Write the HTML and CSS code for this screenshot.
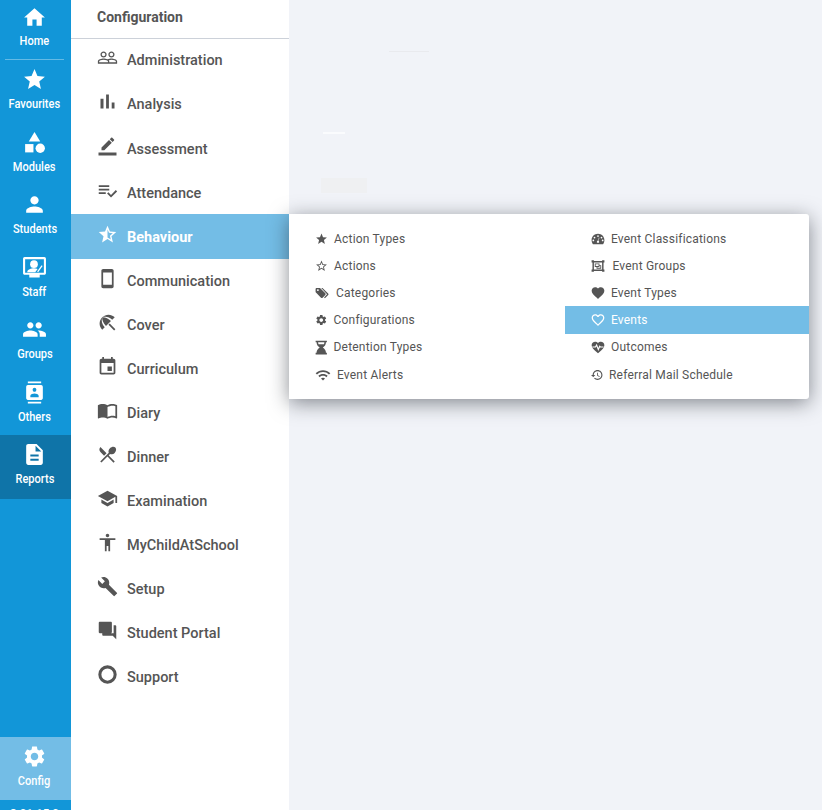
FILE: index.html
```html
<!DOCTYPE html>
<html lang="en">
<head>
<meta charset="utf-8">
<title>Configuration</title>
<link rel="stylesheet" href="styles.css">
</head>
<body>
<div class="app">
  <nav class="rail">
    <a class="rail-item rail-home"><svg class="rail-icon" viewBox="0 0 24 24"><path d="M10 20v-6h4v6h5v-8h3L12 3 2 12h3v8z"/></svg><span class="rail-label">Home</span></a>
    <div class="rail-divider"></div>
    <a class="rail-item"><svg class="rail-icon" viewBox="0 0 24 24"><path d="M12 17.27L18.18 21l-1.64-7.03L22 9.24l-7.19-.61L12 2 9.19 8.63 2 9.24l5.46 4.73L5.82 21z"/></svg><span class="rail-label">Favourites</span></a>
    <a class="rail-item"><svg class="rail-icon" viewBox="0 0 24 24"><path d="M12 2l-5.5 9h11z"/><circle cx="17.5" cy="17.5" r="4.5"/><path d="M3 13.5h8v8H3z"/></svg><span class="rail-label">Modules</span></a>
    <a class="rail-item"><svg class="rail-icon" viewBox="0 0 24 24"><path d="M12 12c2.21 0 4-1.79 4-4s-1.79-4-4-4-4 1.79-4 4 1.79 4 4 4zm0 2c-2.67 0-8 1.34-8 4v2h16v-2c0-2.66-5.33-4-8-4z"/></svg><span class="rail-label">Students</span></a>
    <a class="rail-item"><svg class="rail-icon" viewBox="0 0 24 24"><path fill-rule="evenodd" d="M2.500 2h19c.8 0 1.500.7 1.500 1.500v14c0 .8-.7 1.500-1.500 1.500H17v2.500H7V19H2.500c-.8 0-1.500-.7-1.500-1.500v-14C1 2.700 1.700 2 2.500 2zm.5 2v13h18V4H3z"/><circle cx="11.500" cy="8.800" r="3.700"/><path d="M5 16.500c0-2.800 3.900-3.800 6.500-3.800 1.200 0 2.500.2 3.500.7l-2.300 3.100z"/><path d="M14.500 15.800l4.300-6 1 .8-4.300 6z"/></svg><span class="rail-label">Staff</span></a>
    <a class="rail-item"><svg class="rail-icon" viewBox="0 0 24 24"><path d="M16 11c1.66 0 2.99-1.34 2.99-3S17.66 5 16 5c-1.66 0-3 1.34-3 3s1.34 3 3 3zm-8 0c1.66 0 2.99-1.34 2.99-3S9.66 5 8 5C6.34 5 5 6.34 5 8s1.34 3 3 3zm0 2c-2.33 0-7 1.17-7 3.5V19h14v-2.5c0-2.33-4.67-3.5-7-3.5zm8 0c-.29 0-.62.02-.97.05 1.16.84 1.97 1.97 1.97 3.45V19h6v-2.500c0-2.330-4.670-3.500-7-3.500z"/></svg><span class="rail-label">Groups</span></a>
    <a class="rail-item"><svg class="rail-icon" viewBox="-3 -1.500 30 27" preserveAspectRatio="none"><path d="M20 0H4v2h16V0zM4 24h16v-2H4v2zM20 4H4c-1.100 0-2 .9-2 2v12c0 1.100.9 2 2 2h16c1.100 0 2-.9 2-2V6c0-1.100-.9-2-2-2zm-8 2.750c1.240 0 2.250 1.010 2.250 2.250s-1.010 2.250-2.250 2.250S9.750 10.240 9.750 9 10.760 6.750 12 6.750zM17 17H7v-1.500c0-1.670 3.330-2.500 5-2.500s5 .83 5 2.500V17z"/></svg><span class="rail-label">Others</span></a>
    <a class="rail-item rail-current"><svg class="rail-icon" viewBox="0 0 24 24"><path d="M14 2H6c-1.100 0-1.990.9-1.990 2L4 20c0 1.100.89 2 1.990 2H18c1.100 0 2-.9 2-2V8l-6-6zm2 16H8v-2h8v2zm0-4H8v-2h8v2zm-3-5V3.500L18.500 9H13z"/></svg><span class="rail-label">Reports</span></a>
    <div class="rail-spacer"></div>
    <a class="rail-item rail-config"><svg class="rail-icon" viewBox="0 0 24 24"><path d="M19.140 12.940c.04-.3.06-.61.06-.94 0-.32-.02-.64-.07-.94l2.030-1.580c.18-.14.23-.41.12-.61l-1.920-3.320c-.12-.22-.37-.29-.59-.22l-2.390.96c-.5-.38-1.030-.7-1.620-.94l-.36-2.540c-.04-.24-.24-.41-.48-.41h-3.840c-.24 0-.43.17-.47.41l-.36 2.540c-.59.24-1.130.57-1.620.94l-2.390-.96c-.22-.08-.47 0-.59.22L2.740 8.870c-.12.21-.08.47.12.61l2.030 1.580c-.05.3-.09.63-.09.94s.02.64.07.94l-2.030 1.580c-.18.14-.23.41-.12.61l1.920 3.320c.12.22.37.29.59.22l2.390-.96c.5.38 1.030.7 1.620.94l.36 2.540c.05.24.24.41.48.41h3.840c.24 0 .44-.17.47-.41l.36-2.540c.59-.24 1.130-.56 1.620-.94l2.390.96c.22.08.47 0 .59-.22l1.920-3.320c.12-.22.07-.47-.12-.61l-2.010-1.580zM12 15.600c-1.980 0-3.600-1.620-3.600-3.600s1.620-3.600 3.600-3.600 3.600 1.620 3.600 3.600-1.620 3.600-3.600 3.600z"/></svg><span class="rail-label">Config</span></a>
    <div class="rail-version">2.01.15.0</div>
  </nav>

  <aside class="menu">
    <header class="menu-title">Configuration</header>
    <a class="menu-row"><svg class="menu-icon" viewBox="0 0 24 24"><path d="M16.500 13c-1.200 0-3.070.34-4.500 1-1.430-.67-3.300-1-4.500-1C5.330 13 1 14.080 1 16.250V19h22v-2.750c0-2.170-4.330-3.250-6.500-3.250zm-4 4.500h-10v-1.250c0-.54 2.560-1.750 5-1.750s5 1.210 5 1.750v1.250zm9 0H14v-1.250c0-.46-.2-.86-.52-1.220.88-.3 1.960-.53 3.020-.53 2.440 0 5 1.210 5 1.750v1.250zM7.500 12c1.930 0 3.500-1.570 3.500-3.500S9.430 5 7.500 5 4 6.570 4 8.500 5.570 12 7.500 12zm0-5.500c1.100 0 2 .9 2 2s-.9 2-2 2-2-.9-2-2 .9-2 2-2zm9 5.500c1.930 0 3.500-1.570 3.500-3.500S18.430 5 16.500 5 13 6.570 13 8.500s1.570 3.500 3.500 3.500zm0-5.500c1.100 0 2 .9 2 2s-.9 2-2 2-2-.9-2-2 .9-2 2-2z"/></svg><span>Administration</span></a>
    <a class="menu-row"><svg class="menu-icon" viewBox="1.500 1.500 21 21"><path d="M5 9.200h3V19H5zM10.600 5h2.800v14h-2.800zm5.600 8H19v6h-2.800z"/></svg><span>Analysis</span></a>
    <a class="menu-row"><svg class="menu-icon" viewBox="-2 -2 28 28"><path d="M17.750 7L14 3.250l-10 10V17h3.750l10-10zm2.960-2.960c.39-.39.39-1.020 0-1.410L18.370.29c-.39-.39-1.020-.39-1.410 0L15 2.250 18.750 6l1.960-1.960z"/><path d="M0 20h24v4H0z"/></svg><span>Assessment</span></a>
    <a class="menu-row"><svg class="menu-icon" viewBox="0 0 24 24"><path d="M14 10H2v2h12v-2zm0-4H2v2h12V6zM2 16h8v-2H2v2zm19.500-4.500L23 13l-6.990 7-4.510-4.500L13 14l3.010 3 5.490-5.500z"/></svg><span>Attendance</span></a>
    <a class="menu-row menu-active"><svg class="menu-icon" viewBox="0 0 24 24"><path d="M22 9.240l-7.190-.62L12 2 9.190 8.630 2 9.240l5.460 4.730L5.820 21 12 17.270 18.180 21l-1.630-7.030L22 9.240zM12 15.400V6.100l1.710 4.040 4.380.38-3.320 2.880 1 4.280L12 15.400z" fill-rule="evenodd"/></svg><span>Behaviour</span></a>
    <a class="menu-row"><svg class="menu-icon" viewBox="0 0 24 24"><path d="M17 1.010L7 1c-1.100 0-2 .9-2 2v18c0 1.100.9 2 2 2h10c1.100 0 2-.9 2-2V3c0-1.100-.9-1.990-2-1.990zM17 19H7V5h10v14z"/></svg><span>Communication</span></a>
    <a class="menu-row"><svg class="menu-icon" viewBox="0 0 24 24"><path d="M13.127 14.560l1.430-1.430 6.440 6.443L19.570 21zm4.293-5.730l2.860-2.860c-3.950-3.950-10.350-3.960-14.300-.02 3.930-1.300 8.310-.25 11.440 2.880zM5.950 5.980c-3.940 3.950-3.930 10.350.02 14.300l2.860-2.860C5.700 14.290 4.650 9.910 5.950 5.980zm.02-.02l-.01.01c-.38 3.010 1.170 6.880 4.300 10.020l5.730-5.730c-3.130-3.130-7.010-4.680-10.020-4.300z"/></svg><span>Cover</span></a>
    <a class="menu-row"><svg class="menu-icon" viewBox="0 0 24 24"><path d="M17 12h-5v5h5v-5zM16 1v2H8V1H6v2H5c-1.110 0-1.990.9-1.990 2L3 19c0 1.100.89 2 2 2h14c1.100 0 2-.9 2-2V5c0-1.100-.9-2-2-2h-1V1h-2zm3 18H5V8h14v11z"/></svg><span>Curriculum</span></a>
    <a class="menu-row"><svg class="menu-icon" viewBox="0 0 24 24"><path d="M21 5c-1.110-.35-2.330-.5-3.500-.5-1.950 0-4.050.4-5.500 1.500-1.450-1.100-3.550-1.500-5.500-1.500S2.450 4.900 1 6v14.650c0 .25.25.5.5.5.1 0 .15-.05.25-.05C3.100 20.450 5.050 20 6.500 20c1.950 0 4.050.4 5.500 1.500 1.350-.85 3.800-1.500 5.500-1.500 1.650 0 3.350.3 4.750 1.050.1.05.15.05.25.05.25 0 .5-.25.5-.5V6c-.6-.45-1.250-.75-2-1zm0 13.500c-1.100-.35-2.300-.5-3.500-.5-1.700 0-4.150.65-5.500 1.500V8c1.350-.85 3.800-1.500 5.500-1.500 1.200 0 2.400.15 3.500.5v11.500z"/></svg><span>Diary</span></a>
    <a class="menu-row"><svg class="menu-icon" viewBox="0 0 24 24"><path d="M8.100 13.340l2.830-2.830L3.910 3.500c-1.560 1.560-1.560 4.090 0 5.660l4.190 4.180zm6.780-1.810c1.530.71 3.680.21 5.270-1.380 1.910-1.910 2.280-4.650.81-6.120-1.460-1.460-4.200-1.100-6.120.81-1.590 1.590-2.090 3.740-1.380 5.270L3.700 19.870l1.410 1.410L12 14.410l6.880 6.880 1.410-1.410L13.410 13l1.470-1.470z"/></svg><span>Dinner</span></a>
    <a class="menu-row"><svg class="menu-icon" viewBox="0 0 24 24"><path d="M5 13.180v4L12 21l7-3.820v-4L12 17l-7-3.820zM12 3L1 9l11 6 9-4.910V17h2V9L12 3z"/></svg><span>Examination</span></a>
    <a class="menu-row"><svg class="menu-icon" viewBox="0 0 24 24"><path d="M12 2c1.100 0 2 .9 2 2s-.9 2-2 2-2-.9-2-2 .9-2 2-2zm9 7h-6v13h-2v-6h-2v6H9V9H3V7h18v2z"/></svg><span>MyChildAtSchool</span></a>
    <a class="menu-row"><svg class="menu-icon" viewBox="0 0 24 24"><path d="M22.700 19l-9.100-9.100c.9-2.300.4-5-1.500-6.900-2-2-5-2.400-7.400-1.300L9 6 6 9 1.600 4.700C.4 7.100.9 10.100 2.900 12.100c1.900 1.900 4.600 2.400 6.900 1.500l9.100 9.100c.4.4 1 .4 1.400 0l2.300-2.300c.5-.4.5-1.100.1-1.400z"/></svg><span>Setup</span></a>
    <a class="menu-row"><svg class="menu-icon" viewBox="0 0 24 24"><path d="M21 6h-2v9H6v2c0 .55.45 1 1 1h11l4 4V7c0-.55-.45-1-1-1zm-4 6V3c0-.55-.45-1-1-1H3c-.55 0-1 .45-1 1v11c0 .55.45 1 1 1h13c.55 0 1-.45 1-1z"/></svg><span>Student Portal</span></a>
    <a class="menu-row"><svg class="menu-icon" viewBox="0 0 24 24"><path fill-rule="evenodd" d="M12 1.500a10.500 10.500 0 1 0 0 21 10.500 10.500 0 0 0 0-21zm0 3.500a7 7 0 1 1 0 14 7 7 0 0 1 0-14z"/></svg><span>Support</span></a>
  </aside>

  <main class="content">
    <div class="ghost ghost-line"></div>
    <div class="ghost ghost-white"></div>
    <div class="ghost ghost-block"></div>
    <div class="flyout">
      <ul class="fly-col">
        <li class="fly-row"><svg width="13" height="14" viewBox="0 0 24 24"><path d="M12 17.270L18.180 21l-1.640-7.030L22 9.240l-7.190-.61L12 2 9.190 8.630 2 9.240l5.460 4.730L5.820 21z"/></svg><span>Action Types</span></li>
        <li class="fly-row"><svg width="13" height="14" viewBox="0 0 24 24"><path d="M22 9.240l-7.190-.62L12 2 9.190 8.630 2 9.240l5.460 4.730L5.820 21 12 17.270 18.180 21l-1.630-7.030L22 9.240zM12 15.400l-3.760 2.270 1-4.280-3.320-2.880 4.380-.38L12 6.100l1.710 4.030 4.380.38-3.320 2.880 1 4.280L12 15.400z"/></svg><span>Actions</span></li>
        <li class="fly-row"><svg width="15" height="14" viewBox="0 0 26 24"><path d="M17.900 12.600l-8.800-8.800C8.700 3.400 8.200 3.200 7.700 3.200H3c-1.100 0-2 .9-2 2v4.700c0 .5.2 1 .6 1.400l8.800 8.800c.8.800 2 .8 2.800 0l4.700-4.700c.8-.8.8-2 0-2.800zM5 8.700a1.700 1.700 0 1 1 0-3.400 1.700 1.700 0 0 1 0 3.400z"/><path d="M13 3.200l9.800 9.600c.8.800.8 2 0 2.800l-5.600 5.500-1.500-1.500 5.200-5.400L10.800 3.200z"/></svg><span>Categories</span></li>
        <li class="fly-row"><svg width="12.500" height="14" viewBox="0 0 24 24"><path d="M19.140 12.940c.04-.3.06-.61.06-.94 0-.32-.02-.64-.07-.94l2.030-1.580c.18-.14.23-.41.12-.61l-1.920-3.320c-.12-.22-.37-.29-.59-.22l-2.390.96c-.5-.38-1.030-.7-1.620-.94l-.36-2.540c-.04-.24-.24-.41-.48-.41h-3.840c-.24 0-.43.17-.47.41l-.36 2.540c-.59.24-1.130.57-1.620.94l-2.390-.96c-.22-.08-.47 0-.59.22L2.740 8.870c-.12.21-.08.47.12.61l2.030 1.580c-.05.3-.09.63-.09.94s.02.64.07.94l-2.030 1.580c-.18.14-.23.41-.12.61l1.920 3.320c.12.22.37.29.59.22l2.390-.96c.5.38 1.030.7 1.620.94l.36 2.540c.05.24.24.41.48.41h3.840c.24 0 .44-.17.47-.41l.36-2.540c.59-.24 1.130-.56 1.620-.94l2.390.96c.22.08.47 0 .59-.22l1.920-3.320c.12-.22.07-.47-.12-.61l-2.010-1.580zM12 15.600c-1.980 0-3.600-1.620-3.600-3.600s1.620-3.600 3.600-3.600 3.600 1.620 3.600 3.600-1.620 3.600-3.600 3.600z"/></svg><span>Configurations</span></li>
        <li class="fly-row"><svg width="12.500" height="15" viewBox="0 0 20 24"><path d="M1 1h18v2.500h-1.500c0 4-2.200 6.700-5 8.500 2.800 1.800 5 4.500 5 8.500H19V23H1v-2.500h1.500c0-4 2.200-6.700 5-8.500-2.800-1.800-5-4.500-5-8.500H1zm4 2.500c0 1.200.2 2.300.7 3.200h8.600c.5-.9.700-2 .7-3.200z" fill-rule="evenodd"/></svg><span>Detention Types</span></li>
        <li class="fly-row"><svg width="16" height="15" viewBox="0 1 24 20"><path d="M1 9l2 2c4.970-4.970 13.030-4.970 18 0l2-2C16.930 2.930 7.080 2.930 1 9zm8 8l3 3 3-3c-1.650-1.660-4.340-1.660-6 0zm-4-4l2 2c2.760-2.760 7.240-2.760 10 0l2-2C15.140 9.140 8.870 9.140 5 13z"/></svg><span>Event Alerts</span></li>
      </ul>
      <ul class="fly-col">
        <li class="fly-row"><svg width="14" height="14" viewBox="0 0 24 24"><path fill-rule="evenodd" d="M12 3C5.900 3 1 7.900 1 14c0 2.200.6 4.200 1.700 6 .3.600.9 1 1.600 1h15.400c.7 0 1.300-.4 1.600-1 1.100-1.800 1.700-3.800 1.700-6 0-6.100-4.900-11-11-11zM12 5.500a1.500 1.500 0 1 1 0 3 1.500 1.500 0 0 1 0-3zM6 8a1.500 1.500 0 1 1 0 3 1.500 1.500 0 0 1 0-3zm12 0a1.500 1.500 0 1 1 0 3 1.500 1.500 0 0 1 0-3zM4 13a1.500 1.500 0 1 1 0 3 1.500 1.500 0 0 1 0-3zm16 0a1.500 1.500 0 1 1 0 3 1.500 1.500 0 0 1 0-3zm-6.500-3.500l.9.3-1.500 5.200c.6.500 1.100 1.200 1.100 2 0 .6-.2 1.100-.5 1.500h-3c-.3-.4-.5-.9-.5-1.500 0-1.300 1-2.500 2.400-2.500z"/></svg><span>Event Classifications</span></li>
        <li class="fly-row"><svg width="15.500" height="14" viewBox="0 0 24 24" preserveAspectRatio="xMinYMid meet"><path fill-rule="evenodd" d="M1 2h4v1.500h14V2h4v4h-1.500v12H23v4h-4v-1.500H5V22H1v-4h1.500V6H1zm4 4v12h14V6zM6.500 7.500h8v3h3v6h-8v-3h-3zm1.500 1.500v3h5V9zm3 4.500V15h5v-3h-1.500v1.500z"/></svg><span>Event Groups</span></li>
        <li class="fly-row"><svg width="14" height="14" viewBox="1 1 22 22"><path d="M12 21.350l-1.450-1.320C5.400 15.360 2 12.280 2 8.500 2 5.420 4.420 3 7.500 3c1.740 0 3.410.81 4.500 2.090C13.090 3.810 14.760 3 16.500 3 19.580 3 22 5.420 22 8.500c0 3.780-3.400 6.860-8.550 11.540L12 21.350z"/></svg><span>Event Types</span></li>
        <li class="fly-row fly-active"><svg width="14" height="14" viewBox="1 1 22 22"><path d="M16.500 3c-1.740 0-3.410.81-4.500 2.090C10.910 3.810 9.240 3 7.500 3 4.420 3 2 5.420 2 8.500c0 3.780 3.400 6.860 8.550 11.540L12 21.350l1.450-1.320C18.600 15.360 22 12.280 22 8.500 22 5.420 19.580 3 16.500 3zm-4.400 15.550l-.1.1-.1-.1C7.140 14.240 4 11.390 4 8.500 4 6.500 5.500 5 7.500 5c1.540 0 3.040.99 3.570 2.360h1.870C13.460 5.990 14.960 5 16.500 5c2 0 3.500 1.500 3.500 3.500 0 2.890-3.140 5.740-7.900 10.050z"/></svg><span>Events</span></li>
        <li class="fly-row"><svg width="14" height="14" viewBox="1 1 22 22"><path d="M12 22l-1.450-1.320C5.400 16 2 12.900 2 9.100 2 6 4.420 3.600 7.500 3.600c1.740 0 3.410.81 4.500 2.090C13.090 4.410 14.760 3.600 16.500 3.600 19.580 3.600 22 6 22 9.100c0 3.800-3.400 6.900-8.550 11.580z"/><path class="pulse" d="M3 12h5l1.800-3 2.700 7 2.200-5 1 1h5"/></svg><span>Outcomes</span></li>
        <li class="fly-row"><svg width="12" height="14" viewBox="1 2 22 20"><path d="M13 3c-4.970 0-9 4.030-9 9H1l3.890 3.890.07.14L9 12H6c0-3.870 3.130-7 7-7s7 3.130 7 7-3.130 7-7 7c-1.930 0-3.680-.79-4.940-2.060l-1.420 1.420C8.270 19.990 10.510 21 13 21c4.970 0 9-4.030 9-9s-4.030-9-9-9zm-1 5v5l4.280 2.540.72-1.210-3.500-2.080V8H12z"/></svg><span>Referral Mail Schedule</span></li>
      </ul>
    </div>
  </main>
</div>
</body>
</html>
```
FILE: styles.css
```css
* { box-sizing: border-box; }
html, body { margin: 0; height: 100%; }
body { font-family: Roboto, "Liberation Sans", sans-serif; overflow: hidden; background: #f1f3f8; }
.app { display: flex; width: 822px; height: 810px; overflow: hidden; }

.rail { width: 71px; flex: none; height: 810px; background: #1296d8; display: flex; flex-direction: column; color: #fff; overflow: hidden; }
.rail-item { flex: none; height: 62.5px; padding: 5px 2px 0 0; display: flex; flex-direction: column; align-items: center; }
.rail-home { height: 59px; }
.rail-home .rail-label { margin-top: 3px; }
.rail-divider { flex: none; height: 1px; margin: 0 7px 2px 5px; background: rgba(255,255,255,.35); }
.rail-icon { width: 25px; height: 25px; fill: #fff; flex: none; }
.rail-label { margin-top: 4px; font-size: 13px; line-height: 16px; font-weight: 500; transform: scaleX(.85); white-space: nowrap; }
.rail-current { height: 64px; margin-top: -2.500px; padding-top: 7.500px; background: #0f74a8; }
.rail-spacer { flex: 1; }
.rail-config { height: 63px; padding-top: 7px; background: #73bde6; }
.rail-version { flex: none; height: 10px; padding: 6px 2px 0 0; text-align: center; font-size: 11.500px; line-height: 14px; font-weight: 500; }

.menu { width: 218px; flex: none; height: 810px; background: #fff; color: #555; }
.menu-title { height: 38px; margin-bottom: -1px; padding-left: 26px; font-size: 14px; font-weight: 700; line-height: 34px; box-shadow: 0 1px 0 #ccd1d9; color: #555; }
.menu-row { height: 44px; padding-left: 26px; display: flex; align-items: center; gap: 9px; font-size: 14.500px; font-weight: 500; color: #555; }
.menu-row:nth-of-type(3) { margin-top: 1px; }
.menu-row span { position: relative; top: 1px; }
.menu-icon { width: 21px; height: 21px; flex: none; fill: #555; position: relative; top: -2px; }
.menu-active { background: #73bde6; color: #fff; box-shadow: 0 1px 0 #73bde6; }
.menu-active .menu-icon { fill: #fff; }
.menu-active span { font-weight: 700; }

.content { flex: 1; position: relative; background: #f1f3f8; }
.ghost { position: absolute; }
.ghost-line { left: 100px; top: 51px; width: 40px; height: 1px; background: #e9eaee; }
.ghost-white { left: 34px; top: 132px; width: 22px; height: 2px; background: #fafbfd; }
.ghost-block { left: 32px; top: 178px; width: 46px; height: 15px; background: #eff0f2; }
.flyout { position: absolute; left: 0; top: 214px; width: 520px; height: 185px; padding: 11px 0; display: grid; grid-template-columns: 276px 244px; background: #fff; border-radius: 0 3px 3px 0; box-shadow: 0 4px 20px rgba(40,45,55,.55); }
.fly-col { list-style: none; margin: 0; padding: 0; }
.fly-row { height: 27.200px; padding-left: 26px; display: flex; align-items: center; gap: 6px; font-size: 12px; letter-spacing: .2px; color: #555; }
.fly-row svg { flex: none; fill: #555; }
.fly-active { background: #73bde6; color: #fff; box-shadow: 0 -1px 0 #73bde6; }
.fly-active svg { fill: #fff; }
.pulse { fill: none; stroke: #fff; stroke-width: 1.800; }
```
